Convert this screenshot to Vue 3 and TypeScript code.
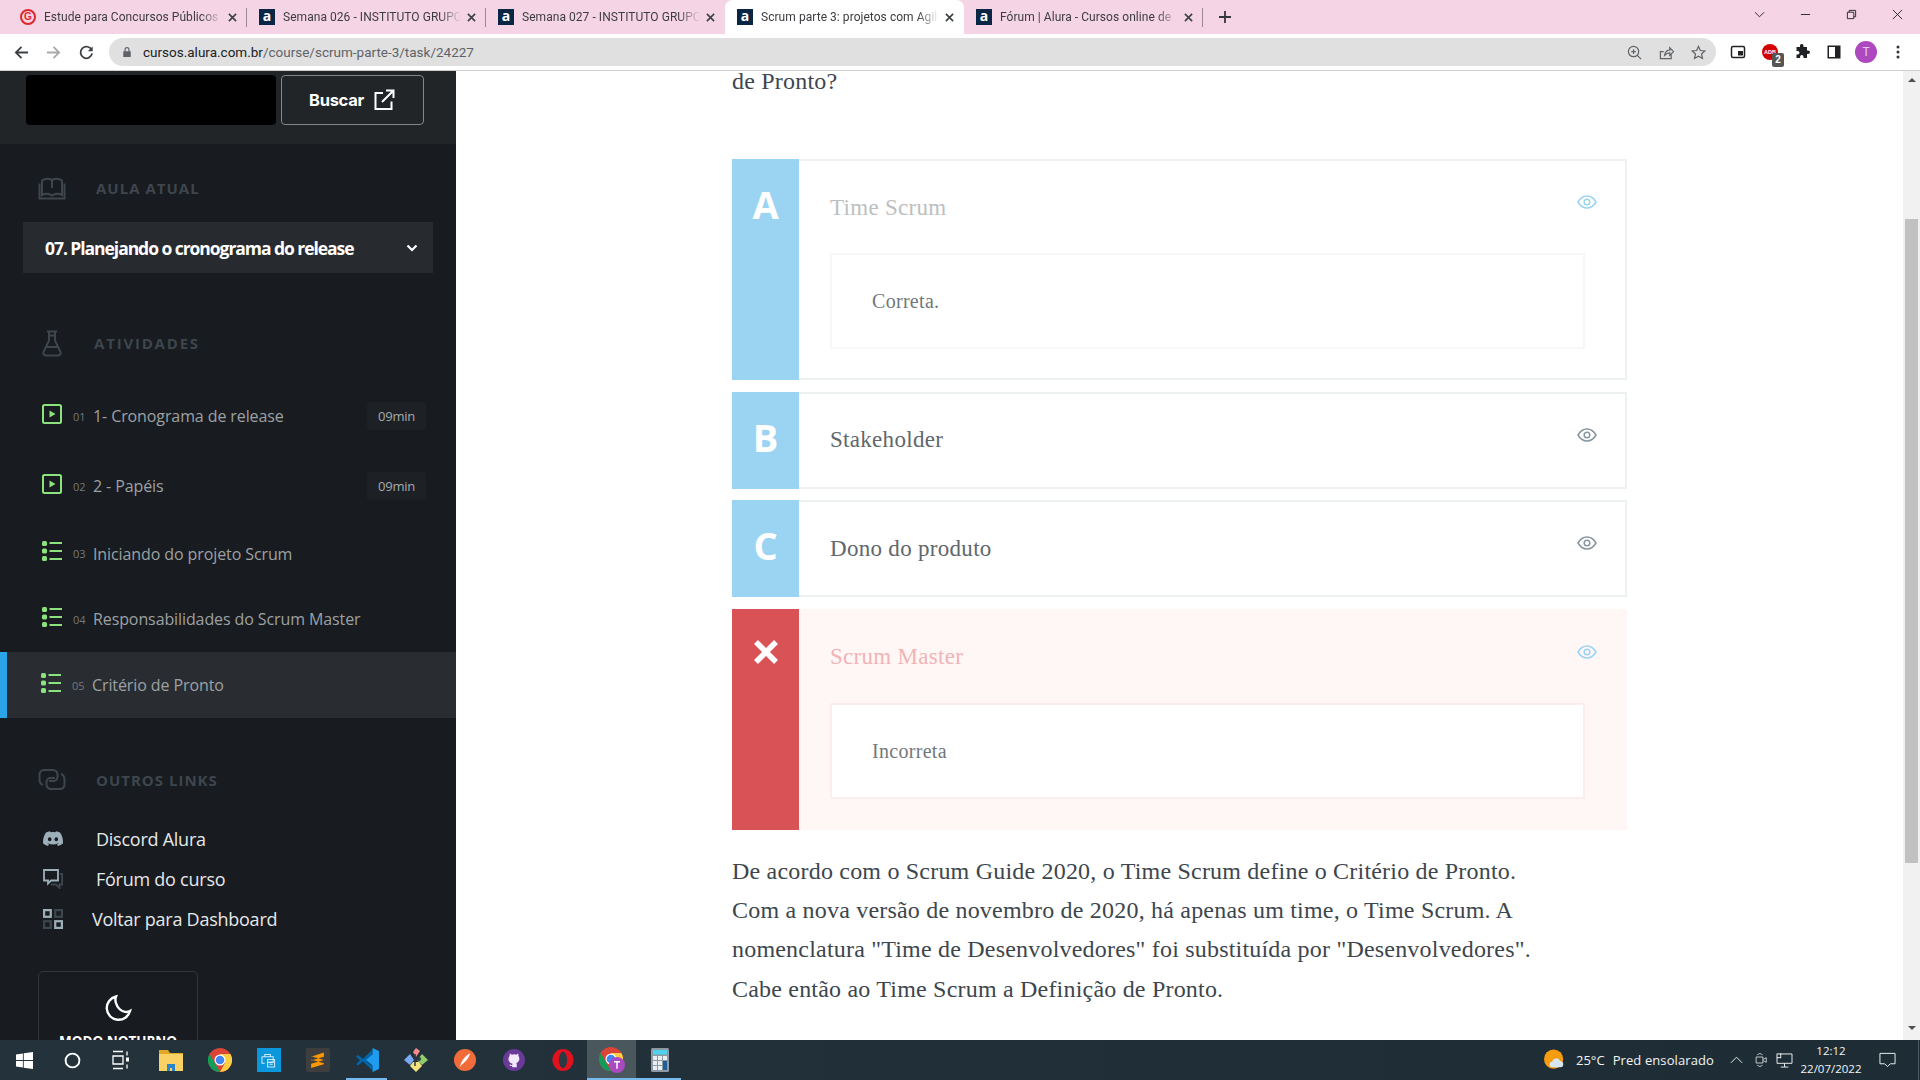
<template>
  <div class="screen">
    <header class="tabstrip">
      <div
        v-for="tab in tabs"
        :key="tab.title"
        class="tab"
        :class="{ 'tab--active': tab.active, 'tab--sep': tab.separator }"
      >
        <span v-if="tab.google" class="fav-google">G</span>
        <span v-else class="fav-alura">a</span>
        <span class="tab-title">{{ tab.title }}</span>
        <svg class="tab-close" viewBox="0 0 10 10"><path d="M1 1l8 8M9 1l-8 8" /></svg>
      </div>
      <svg class="tab-plus" viewBox="0 0 12 12"><path d="M6 0v12M0 6h12" /></svg>
      <div class="win-controls">
        <svg viewBox="0 0 12 12"><path d="M1 3.5l5 5 5-5" /></svg>
        <svg viewBox="0 0 12 12"><path d="M1 6h10" /></svg>
        <svg viewBox="0 0 12 12"><path d="M1.5 3.5h7v7h-7zM3.5 3.5v-2h7v7h-2" /></svg>
        <svg viewBox="0 0 12 12"><path d="M1 1l10 10M11 1l-10 10" /></svg>
      </div>
    </header>

    <div class="toolbar">
      <svg class="nav-icon" viewBox="0 0 16 16"><path d="M15 8H2M8 2L2 8l6 6" /></svg>
      <svg class="nav-icon nav-icon--off" viewBox="0 0 16 16"><path d="M1 8h13M8 2l6 6-6 6" /></svg>
      <svg class="nav-icon" viewBox="0 0 16 16"><path d="M13.6 5.5A6.2 6.2 0 1 0 14 9" /><path class="fill" d="M14.6 1.5v5.2H9.4z" /></svg>
      <div class="omnibox">
        <svg class="lock" viewBox="0 0 12 14"><path d="M3 6V4a3 3 0 0 1 6 0v2h1.500v7h-9V6zm1.400 0h3.200V4a1.600 1.600 0 0 0-3.200 0z" /></svg>
        <span class="url"><b>cursos.alura.com.br</b>/course/scrum-parte-3/task/24227</span>
        <svg class="omni-icon" viewBox="0 0 16 16"><circle cx="7" cy="7" r="5.500" /><path d="M11 11l4 4M7 4.500v5M4.500 7h5" /></svg>
        <svg class="omni-icon" viewBox="0 0 16 16"><path d="M13 10v4.500H1.500V7H5M6 11c.5-3.500 3-5.500 5.500-5.500V3l4 4-4 4V8.500C9.500 8.500 7.500 9.500 6 11z" /></svg>
        <svg class="omni-icon" viewBox="0 0 16 16"><path d="M8 1.500l2 4.400 4.700.5-3.500 3.200 1 4.700L8 11.900l-4.200 2.400 1-4.700-3.500-3.200 4.700-.5z" /></svg>
      </div>
      <div class="ext-row">
        <svg class="ext" viewBox="0 0 16 16"><rect x="1.500" y="2.500" width="13" height="11" rx="1.500" fill="none" stroke="#202124" stroke-width="1.500" /><rect x="8" y="7" width="5" height="4.500" fill="#202124" /></svg>
        <span class="adblock">
          <span class="adblock-dot">ADB</span>
          <span class="adblock-num">2</span>
        </span>
        <svg class="ext" viewBox="0 0 16 16"><path fill="#202124" d="M6 1.500a1.800 1.800 0 0 1 3.500 0V3H13v3.500h1.200a1.800 1.800 0 0 1 0 3.600H13V14H9.500v-1.300a1.700 1.700 0 0 0-3.400 0V14H2.500v-3.500h1.200a1.800 1.800 0 0 0 0-3.600H2.500V3H6z" /></svg>
        <svg class="ext" viewBox="0 0 16 16"><rect x="1.500" y="1.500" width="13" height="13" fill="#202124" /><rect x="3" y="3" width="6" height="10" fill="#fff" /></svg>
        <span class="avatar">T</span>
        <svg class="ext" viewBox="0 0 16 16"><circle cx="8" cy="3" r="1.500" fill="#333" /><circle cx="8" cy="8" r="1.500" fill="#333" /><circle cx="8" cy="13" r="1.500" fill="#333" /></svg>
      </div>
    </div>

    <div class="viewport">
      <aside class="sidebar">
        <div class="search">
          <div class="search-input"></div>
          <button class="search-btn">
            Buscar
            <svg viewBox="0 0 24 24"><path d="M11 5H3.500v16h16v-7.500M10 14L21 3M14 2.500h7.500V10" /></svg>
          </button>
        </div>

        <div class="side-title side-title--lesson">
          <svg class="title-icon" viewBox="0 0 28 23"><path d="M4 3.500C7 1.500 11 1.500 14 3c3-1.500 7-1.500 10 .5v14.500c-3-1.500-7-1.500-10 .5-3-2-7-2-10-.5zM14 3v8M1.500 6.500v15h25v-15" /></svg>
          <span>AULA ATUAL</span>
        </div>
        <div class="lesson-select">
          <span>07. Planejando o cronograma do release</span>
          <svg viewBox="0 0 12 8"><path d="M1.500 1.500L6 6l4.500-4.500" /></svg>
        </div>

        <div class="side-title side-title--activities">
          <svg class="title-icon title-icon--flask" viewBox="0 0 20 27"><path d="M5 1.500h10M7 1.500v9L1.800 21.500a2.600 2.600 0 0 0 2.400 4h11.600a2.600 2.600 0 0 0 2.400-4L13 10.500v-9M7 5.500h6M4.500 17h11" /></svg>
          <span>ATIVIDADES</span>
        </div>
        <ul class="activities">
          <li
            v-for="item in activities"
            :key="item.num"
            class="activity"
            :class="{ 'activity--current': item.current, 'activity--video': item.video }"
          >
            <svg v-if="item.video" class="activity-icon" viewBox="0 0 20 20">
              <rect x="1" y="1" width="18" height="18" rx="1.500" fill="none" stroke="#8ce27c" stroke-width="2" />
              <path d="M7.500 6.500v7l6-3.500z" fill="#8ce27c" />
            </svg>
            <svg v-else class="activity-icon" viewBox="0 0 20 20">
              <rect x="0" y="0" width="5" height="5" rx="1.500" fill="#8ce27c" />
              <rect x="0" y="7.500" width="5" height="5" rx="1.500" fill="#8ce27c" />
              <rect x="0" y="15" width="5" height="5" rx="1.500" fill="#8ce27c" />
              <path d="M7.500 2h12.500M7.500 10h12.500M7.500 18h12.500" stroke="#8ce27c" stroke-width="2" />
            </svg>
            <span class="activity-num">{{ item.num }}</span>
            <span class="activity-name">{{ item.name }}</span>
            <span v-if="item.time" class="activity-time">{{ item.time }}</span>
          </li>
        </ul>

        <div class="side-title side-title--links">
          <svg class="title-icon" viewBox="0 0 28 22"><path d="M5 16.500C2.500 15.500 1.500 13.500 1.500 11V6a4.500 4.500 0 0 1 4.500-4.500h9A4.500 4.500 0 0 1 19.500 6v2.500a4 4 0 0 1-4 4H11M23 5.500c2.500 1 3.500 3 3.500 5.500v5a4.500 4.500 0 0 1-4.500 4.500h-9A4.500 4.500 0 0 1 8.500 16v-2.500a4 4 0 0 1 4-4H17" /></svg>
          <span>OUTROS LINKS</span>
        </div>
        <div class="link-row">
          <svg class="link-icon" viewBox="0 0 20 16"><path fill="#9db0b9" d="M17 1.500A16 16 0 0 0 13 .2l-.5 1a15 15 0 0 0-5 0L7 .2a16 16 0 0 0-4 1.300C.5 5.200-.2 8.800.1 12.400A16 16 0 0 0 5 15l1-1.700-1.600-.8.400-.3a11.500 11.500 0 0 0 10.400 0l.4.300-1.600.8L15 15a16 16 0 0 0 4.900-2.600c.4-4.200-.7-7.800-2.900-10.900zM6.700 10.300c-1 0-1.800-.9-1.800-2s.8-2 1.800-2 1.800.9 1.800 2-.8 2-1.800 2zm6.600 0c-1 0-1.800-.9-1.800-2s.8-2 1.800-2 1.800.9 1.800 2-.8 2-1.800 2z" /></svg>
          <span class="link-text">Discord Alura</span>
        </div>
        <div class="link-row">
          <svg class="link-icon" viewBox="0 0 20 20"><path fill="none" stroke="#9db0b9" stroke-width="1.800" d="M1 1h14v10.500H8L5 14.500v-3H1z" /><path fill="none" stroke="#3d464d" stroke-width="1.800" d="M17 5h2.200v10.500h-2.700V19l-3.500-3.500H8" /></svg>
          <span class="link-text">Fórum do curso</span>
        </div>
        <div class="link-row">
          <svg class="link-icon" viewBox="0 0 18 18"><g fill="none" stroke-width="2"><rect x="1" y="1" width="6" height="6" stroke="#9db0b9" /><rect x="11" y="1" width="6" height="6" stroke="#3d464d" /><rect x="1" y="11" width="6" height="6" stroke="#3d464d" /><rect x="11" y="11" width="6" height="6" stroke="#9db0b9" /></g></svg>
          <span class="link-text link-text--back">Voltar para Dashboard</span>
        </div>

        <div class="night-mode">
          <svg viewBox="0 0 28 28"><path d="M12 2.500a11.800 11.800 0 1 0 14 14.500c-2.500 1.500-7 1.500-10.500-2S10.500 6 12 2.500z" /></svg>
          <span>MODO NOTURNO</span>
        </div>
      </aside>

      <main class="content">
        <p class="question">de Pronto?</p>
        <div class="options">
          <section
            v-for="option in options"
            :key="option.title"
            class="option"
            :class="{ 'option--wrong': option.wrong, 'option--open': option.feedback }"
          >
            <div class="option-letter">
              <svg v-if="option.wrong" viewBox="0 0 26 26"><path d="M3 3l20 20M23 3L3 23" /></svg>
              <span v-else>{{ option.letter }}</span>
            </div>
            <div class="option-body">
              <div class="option-head">
                <span class="option-title">{{ option.title }}</span>
                <svg class="eye" viewBox="0 0 20 14"><path d="M1 7c2.200-3.800 5.300-6 9-6s6.800 2.200 9 6c-2.200 3.800-5.300 6-9 6s-6.800-2.200-9-6z" /><circle cx="10" cy="7" r="2.800" /></svg>
              </div>
              <div v-if="option.feedback" class="option-feedback">{{ option.feedback }}</div>
            </div>
          </section>
        </div>
        <div class="explanation">
          <span v-for="line in explanation" :key="line">{{ line }}</span>
        </div>
      </main>

      <div class="scrollbar">
        <i class="arrow arrow--up"></i>
        <div class="thumb"></div>
        <i class="arrow arrow--down"></i>
      </div>
    </div>

    <footer class="taskbar">
      <div class="task-slot task-slot--sys">
        <svg viewBox="0 0 18 18" width="17" height="17"><path fill="#fff" d="M0 2.600l7.300-1v7H0zM8.200 1.400L18 0v8.600H8.200zM0 9.400h7.300v7L0 15.400zM8.200 9.400H18V18l-9.800-1.400z" /></svg>
      </div>
      <div class="task-slot task-slot--sys">
        <svg viewBox="0 0 18 18" width="17" height="17"><circle cx="9" cy="9" r="7.300" fill="none" stroke="#fff" stroke-width="2" /></svg>
      </div>
      <div class="task-slot task-slot--sys task-slot--view">
        <svg viewBox="0 0 20 20" width="20" height="20"><path fill="none" stroke="#fff" stroke-width="1.300" d="M2 1.500h10M2 18.500h10M2 6h10v8H2zM16 1.500v4M16 14.500v4" /><rect x="15" y="7.500" width="3" height="4" fill="#fff" /></svg>
      </div>
      <div class="task-slot">
        <svg viewBox="0 0 24 22" width="24" height="22"><path fill="#e0a826" d="M0 1h9l2 3h13v18H0z" /><path fill="#fad165" d="M0 5h24v17H0z" /><path fill="#2a85c9" d="M8 22v-7h8v7h-3v-3h-2v3z" /></svg>
      </div>
      <div class="task-slot">
        <svg viewBox="0 0 24 24" width="24" height="24">
          <circle cx="12" cy="12" r="12" fill="#db4437" />
          <path fill="#0f9d58" d="M12 24A12 12 0 0 1 1.600 6L7 15.500z" />
          <path fill="#ffcd40" d="M12 24a12 12 0 0 0 10.400-18H12l5 9z" />
          <circle cx="12" cy="12" r="5.500" fill="#fff" />
          <circle cx="12" cy="12" r="4.300" fill="#4285f4" />
        </svg>
      </div>
      <div class="task-slot">
        <span class="store-tile">
          <svg viewBox="0 0 16 16" width="15" height="15"><path fill="none" stroke="#cfeaf8" stroke-width="1.100" d="M4 4V1.500h6V4M1 4h12v6H7M1 4v7h3M7 7h7.500v8H7zM9 9.500h3.500M9 12h3.500" /></svg>
        </span>
      </div>
      <div class="task-slot">
        <span class="sublime-tile">
          <svg viewBox="0 0 16 16" width="17" height="18"><path fill="#ff9800" d="M14 1v4L2 8.500V5zM2 7.500l12 3.500v-3L2 4.500zM14 8v4L2 15.500v-4z" /></svg>
        </span>
      </div>
      <div class="task-slot task-slot--running">
        <svg viewBox="0 0 24 24" width="24" height="24">
          <path fill="#0065a9" d="M1 8.500l2-1.500 5 3.800L17 2l.5 7-6 4.500 6 4.500-.5 4-9-8.500L3 17.500 1 16l4-3.500z" />
          <path fill="#1f9cf0" d="M17.500 0L24 3v18l-6.500 3zM17.500 6.500L11 12l6.500 5.500z" />
        </svg>
      </div>
      <div class="task-slot">
        <svg viewBox="0 0 24 24" width="24" height="24">
          <path fill="#f78c8c" d="M12 0l4 3-4 6-3-5z" />
          <path fill="#7aa9f7" d="M0 12l6-6 4 6-4 5z" />
          <path fill="#8fce6b" d="M24 12l-6-6-5 6 5 5z" />
          <path fill="#f4e27c" d="M12 24l-6-6 3-4h6l3 4z" />
          <circle cx="15" cy="11" r="2" fill="#2a3a42" />
          <path stroke="#2a3a42" stroke-width="1.500" d="M11 6v12" />
        </svg>
      </div>
      <div class="task-slot">
        <svg viewBox="0 0 24 24" width="22" height="24"><circle cx="12" cy="12" r="12" fill="#f26b3a" /><path fill="#fff" d="M17.500 4.500c-.7 4-4.500 9-9 12.500l-1.800 2.500.6-3.200C9 11.500 13 7 17.500 4.500z" /></svg>
      </div>
      <div class="task-slot">
        <svg viewBox="0 0 24 24" width="22" height="24"><circle cx="12" cy="12" r="12" fill="#6a3a98" /><path fill="#f3e9fb" d="M7.500 5l2.300 1.200a7 7 0 0 1 4.400 0L16.500 5l.5 3a5 5 0 0 1-2.500 7.500c.4.500.5 1 .5 1.500v3H10v-1.500c-1.500.3-2.500-.2-3-1.700l1.200.2c.5.700 1 .8 1.800.7 0-.7.100-1.200.5-1.700A5 5 0 0 1 7 8z" /></svg>
      </div>
      <div class="task-slot">
        <svg viewBox="0 0 24 24" width="22" height="24"><ellipse cx="12" cy="12" rx="11.500" ry="12" fill="#e0121f" /><ellipse cx="12" cy="12" rx="4.500" ry="9" fill="#2a3a42" /></svg>
      </div>
      <div class="task-slot task-slot--active task-slot--running">
        <svg viewBox="0 0 26 26" width="26" height="26">
          <circle cx="12" cy="12" r="12" fill="#db4437" />
          <path fill="#0f9d58" d="M12 24A12 12 0 0 1 1.600 6L7 15.500z" />
          <path fill="#ffcd40" d="M12 24a12 12 0 0 0 10.400-18H12l5 9z" />
          <circle cx="12" cy="12" r="5.500" fill="#fff" />
          <circle cx="12" cy="12" r="4.300" fill="#4285f4" />
          <circle cx="18" cy="18" r="8" fill="#a94ac0" />
          <path stroke="#fff" stroke-width="1.400" d="M15 14.800h6M18 14.800v7" />
        </svg>
      </div>
      <div class="task-slot task-slot--calc task-slot--running">
        <svg viewBox="0 0 18 24" width="18" height="24">
          <rect width="18" height="24" rx="1.500" fill="#8d9aa3" />
          <rect x="2" y="2" width="14" height="4.500" fill="#4fd0ee" />
          <g fill="#e8eef1"><rect x="2" y="8" width="4" height="4" /><rect x="7" y="8" width="4" height="4" /><rect x="12" y="8" width="4" height="4" /><rect x="2" y="13" width="4" height="4" /><rect x="7" y="13" width="4" height="4" /><rect x="2" y="18" width="4" height="4" /><rect x="7" y="18" width="4" height="4" /></g>
          <rect x="12" y="13" width="4" height="9" fill="#1f5f99" />
        </svg>
      </div>

      <div class="tray">
        <svg class="weather" viewBox="0 0 24 24"><circle cx="10.500" cy="11" r="10.500" fill="#f59c0f" /><path fill="#d8e6f2" d="M9 20a3 3 0 0 1 0-6 4.500 4.500 0 0 1 8.600-1 3.600 3.600 0 0 1 3.400 3.600A3.400 3.400 0 0 1 18 20z" /></svg>
        <span class="tray-temp">25°C</span>
        <span class="tray-cond">Pred ensolarado</span>
        <svg class="tray-icon tray-icon--chev" viewBox="0 0 14 8"><path d="M1 7l6-6 6 6" /></svg>
        <svg class="tray-icon tray-icon--meet" viewBox="0 0 16 20"><path d="M3 3a5 5 0 0 1 7 0M3 17a5 5 0 0 0 7 0M1.500 6h9v8h-9zM11 9l4-2v6l-4-2" /></svg>
        <svg class="tray-icon tray-icon--net" viewBox="0 0 18 16"><path d="M4 1h13v10H1V5M9 11v4M5 15h8" /><rect x="1" y="1" width="4" height="4" /></svg>
        <div class="clock">
          <span>12:12</span>
          <span>22/07/2022</span>
        </div>
        <svg class="tray-icon tray-icon--note" viewBox="0 0 18 16"><path d="M1 1h16v11h-5l-3 3-3-3H1z" /></svg>
        <i class="show-desktop"></i>
      </div>
    </footer>
  </div>
</template>

<script setup lang="ts">
interface BrowserTab {
  title: string
  google?: boolean
  active?: boolean
  separator?: boolean
}

interface Activity {
  num: string
  name: string
  time?: string
  video?: boolean
  current?: boolean
}

interface AnswerOption {
  letter: string
  title: string
  feedback?: string
  wrong?: boolean
}

const tabs: BrowserTab[] = [
  { title: 'Estude para Concursos Públicos c', google: true, separator: true },
  { title: 'Semana 026 - INSTITUTO GRUPO', separator: true },
  { title: 'Semana 027 - INSTITUTO GRUPO' },
  { title: 'Scrum parte 3: projetos com Agil', active: true },
  { title: 'Fórum | Alura - Cursos online de', separator: true },
]

const activities: Activity[] = [
  { num: '01', name: '1- Cronograma de release', time: '09min', video: true },
  { num: '02', name: '2 - Papéis', time: '09min', video: true },
  { num: '03', name: 'Iniciando do projeto Scrum' },
  { num: '04', name: 'Responsabilidades do Scrum Master' },
  { num: '05', name: 'Critério de Pronto', current: true },
]

const options: AnswerOption[] = [
  { letter: 'A', title: 'Time Scrum', feedback: 'Correta.' },
  { letter: 'B', title: 'Stakeholder' },
  { letter: 'C', title: 'Dono do produto' },
  { letter: 'D', title: 'Scrum Master', feedback: 'Incorreta', wrong: true },
]

const explanation: string[] = [
  'De acordo com o Scrum Guide 2020, o Time Scrum define o Critério de Pronto.',
  'Com a nova versão de novembro de 2020, há apenas um time, o Time Scrum. A',
  'nomenclatura "Time de Desenvolvedores" foi substituída por "Desenvolvedores".',
  'Cabe então ao Time Scrum a Definição de Pronto.',
]
</script>

<style>
html,
body {
  margin: 0;
  overflow: hidden;
}
</style>

<style scoped>
.screen {
  width: 1920px;
  height: 1080px;
  display: flex;
  flex-direction: column;
  overflow: hidden;
  font-family: "Open Sans", sans-serif;
}

/* browser chrome */
.tabstrip {
  height: 34px;
  flex: none;
  display: flex;
  align-items: stretch;
  padding-left: 8px;
  background: #f5d5e5;
  font-family: Roboto, "Noto Sans", sans-serif;
}
.tab {
  position: relative;
  width: 239px;
  box-sizing: border-box;
  display: flex;
  align-items: center;
  padding: 0 10px 0 12px;
  font-size: 12px;
  color: #3c3c40;
}
.tab--sep::after {
  content: "";
  position: absolute;
  right: 0;
  top: 8px;
  height: 19px;
  width: 1px;
  background: #9c8a94;
}
.tab--active {
  background: #fff;
  border-radius: 8px 8px 0 0;
}
.fav-alura {
  width: 16px;
  height: 16px;
  flex: none;
  background: #0b2545;
  color: #fff;
  font: 700 14px/14px "Open Sans", sans-serif;
  text-align: center;
}
.fav-google {
  width: 16px;
  height: 16px;
  flex: none;
  box-sizing: border-box;
  border: 2px solid #e0272b;
  border-radius: 50%;
  color: #e0272b;
  font: 700 10px/12px "Liberation Sans", sans-serif;
  text-align: center;
}
.tab-title {
  flex: 1;
  min-width: 0;
  margin-left: 8px;
  white-space: nowrap;
  overflow: hidden;
  letter-spacing: 0.05px;
  -webkit-mask-image: linear-gradient(to right, #000 88%, transparent 100%);
  mask-image: linear-gradient(to right, #000 88%, transparent 100%);
}
.tab-close {
  width: 9px;
  height: 9px;
  flex: none;
  margin-left: 6px;
  fill: none;
  stroke: #3c4043;
  stroke-width: 1.800;
}
.tab-plus {
  width: 12px;
  height: 12px;
  margin: 11px 0 0 16px;
  fill: none;
  stroke: #35363a;
  stroke-width: 1.800;
}
.win-controls {
  margin-left: auto;
  display: flex;
  height: 28px;
  align-items: center;
  gap: 35px;
  padding-right: 17px;
}
.win-controls svg {
  width: 11px;
  height: 11px;
  fill: none;
  stroke: #222;
  stroke-width: 1;
}

.toolbar {
  height: 36px;
  flex: none;
  box-sizing: content-box;
  display: flex;
  align-items: center;
  background: #fff;
  border-bottom: 1px solid #cfcfcf;
  padding-left: 14px;
}
.nav-icon {
  width: 15px;
  height: 15px;
  margin-right: 17px;
  fill: none;
  stroke: #3c4043;
  stroke-width: 1.900;
}
.nav-icon--off {
  margin-right: 18px;
  stroke: #a9a9a9;
}
.nav-icon .fill {
  fill: #3c4043;
  stroke: none;
}
.omnibox {
  width: 1607px;
  height: 28px;
  margin-left: -2px;
  box-sizing: border-box;
  display: flex;
  align-items: center;
  background: #e0e0e0;
  border-radius: 14px;
  padding-left: 13px;
}
.lock {
  width: 10px;
  height: 12px;
  fill: #5f6368;
}
.url {
  margin-left: 11px;
  font: 13.500px Roboto, "Noto Sans", sans-serif;
  color: #5f6368;
  white-space: nowrap;
}
.url b {
  font-weight: 400;
  color: #202124;
}
.omni-icon {
  width: 15px;
  height: 15px;
  fill: none;
  stroke: #5f6368;
  stroke-width: 1.300;
  margin-right: 17px;
}
.url + .omni-icon {
  margin-left: auto;
}
.omni-icon:last-child {
  margin-right: 10px;
}
.ext-row {
  display: flex;
  align-items: center;
  margin-left: 14px;
  gap: 16px;
}
.ext {
  width: 16px;
  height: 16px;
}
.adblock {
  position: relative;
  width: 16px;
  height: 16px;
}
.adblock-dot {
  display: block;
  width: 16px;
  height: 16px;
  border-radius: 50%;
  background: #d40000;
  color: #fff;
  font: 700 5.500px/16px "Liberation Sans", sans-serif;
  text-align: center;
}
.adblock-num {
  position: absolute;
  left: 10px;
  top: 9px;
  width: 12px;
  height: 14px;
  border-radius: 2px;
  background: #555;
  color: #fff;
  font: 700 10px/14px "Liberation Sans", sans-serif;
  text-align: center;
}
.avatar {
  width: 22px;
  height: 22px;
  margin: 0 -3px;
  border-radius: 50%;
  background: #ad48bf;
  color: #ecc7f2;
  font: 12px/22px Roboto, sans-serif;
  text-align: center;
}

.viewport {
  flex: 1;
  min-height: 0;
  display: flex;
  background: #fff;
}

/* left menu */
.sidebar {
  width: 456px;
  flex: none;
  background: #181b1f;
  overflow: hidden;
}
.search {
  height: 73px;
  box-sizing: border-box;
  display: flex;
  gap: 5px;
  padding: 4px 0 0 26px;
  background: #212528;
}
.search-input {
  width: 250px;
  height: 50px;
  background: #000;
  border-radius: 4px;
}
.search-btn {
  width: 143px;
  height: 50px;
  box-sizing: border-box;
  display: flex;
  align-items: center;
  justify-content: center;
  gap: 8px;
  background: transparent;
  border: 1px solid #83878a;
  border-radius: 4px;
  color: #fff;
  font: 700 16.500px Inter, sans-serif;
  letter-spacing: -0.3px;
}
.search-btn svg {
  width: 24px;
  height: 24px;
  fill: none;
  stroke: #fff;
  stroke-width: 2;
}
.side-title {
  display: flex;
  align-items: center;
  font-size: 15px;
  font-weight: 700;
  letter-spacing: 1px;
  color: #3d464d;
  white-space: nowrap;
}
.title-icon {
  flex: none;
  fill: none;
  stroke: #3d464d;
  stroke-width: 2;
  width: 28px;
  height: 23px;
}
.side-title--lesson {
  height: 30px;
  margin-top: 29px;
  padding-left: 38px;
  gap: 30px;
}
.lesson-select {
  width: 410px;
  height: 51px;
  box-sizing: border-box;
  margin: 19px 0 0 23px;
  display: flex;
  align-items: center;
  justify-content: space-between;
  padding: 0 15px 0 22px;
  background: #272b2f;
  color: #fff;
  font-size: 17.500px;
  font-weight: 700;
  letter-spacing: -1.050px;
  white-space: nowrap;
}
.lesson-select svg {
  width: 12px;
  height: 8px;
  fill: none;
  stroke: #fff;
  stroke-width: 2.200;
}
.side-title--activities {
  height: 30px;
  margin-top: 55px;
  padding-left: 42px;
  gap: 32px;
  letter-spacing: 1.800px;
}
.title-icon--flask {
  width: 20px;
  height: 27px;
}
.activities {
  list-style: none;
  margin: 23px 0 0;
  padding: 0;
}
.activity {
  position: relative;
  height: 65.500px;
  box-sizing: border-box;
  display: flex;
  align-items: center;
  padding-left: 42px;
}
.activity--video {
  height: 70px;
}
.activity--current {
  height: 66px;
  padding-left: 34px;
  border-left: 7px solid #2ba5e8;
  background: #292d31;
}
.activity-icon {
  width: 20px;
  height: 20px;
  flex: none;
  margin-top: -5px;
}
.activity-num {
  width: 20px;
  margin-left: 11px;
  font-size: 11px;
  color: #73787c;
}
.activity-name {
  font-size: 16px;
  letter-spacing: -0.1px;
  color: #9da1a4;
  white-space: nowrap;
}
.activity-time {
  margin-left: auto;
  margin-right: 30px;
  width: 59px;
  height: 28px;
  background: #1d2125;
  border-radius: 2px;
  font-size: 13px;
  letter-spacing: -0.2px;
  line-height: 28px;
  text-align: center;
  color: #a6aaad;
}
.side-title--links {
  height: 30px;
  margin-top: 46.500px;
  padding-left: 38px;
  gap: 30px;
}
.link-row {
  height: 40px;
  display: flex;
  align-items: center;
  padding-left: 43px;
}
.side-title--links + .link-row {
  margin-top: 24.500px;
}
.link-icon {
  width: 20px;
  height: 20px;
  flex: none;
}
.link-text {
  margin-left: 33px;
  font-size: 18px;
  letter-spacing: -0.25px;
  color: #e6e8e9;
  white-space: nowrap;
}
.link-text--back {
  margin-left: 29px;
}
.night-mode {
  width: 160px;
  height: 120px;
  box-sizing: border-box;
  margin: 32px 0 0 38px;
  display: flex;
  flex-direction: column;
  align-items: center;
  padding-top: 22px;
  gap: 10px;
  border: 1px solid #33373b;
  border-radius: 5px;
  color: #fff;
  font-size: 13.500px;
  font-weight: 700;
  white-space: nowrap;
}
.night-mode svg {
  width: 28px;
  height: 28px;
  flex: none;
  fill: none;
  stroke: #fff;
  stroke-width: 2.400;
}

/* course task */
.content {
  flex: 1;
  min-width: 0;
  box-sizing: border-box;
  padding-left: 276px;
  overflow: hidden;
  font-family: "Liberation Serif", serif;
}
.question {
  margin: 0;
  font-size: 24px;
  line-height: 20px;
  letter-spacing: 0.2px;
  color: #3d464d;
}
.options {
  width: 895px;
  margin-top: 68px;
  display: flex;
  flex-direction: column;
  gap: 11.500px;
}
.option {
  display: flex;
  box-sizing: border-box;
  border: 2px solid #eef1f2;
  border-left: 0;
}
.option--wrong {
  background: #fff6f6;
  border-color: #fff6f6;
}
.option-letter {
  width: 67px;
  flex: none;
  margin: -2px 0;
  padding-top: 20px;
  background: #9bd4f3;
  color: #fff;
  font: 700 38px/50px "Open Sans", sans-serif;
  text-align: center;
}
.option--wrong .option-letter {
  background: #d95356;
}
.option-letter svg {
  display: block;
  width: 26px;
  height: 26px;
  margin: 10px auto 0;
  fill: none;
  stroke: #fff;
  stroke-width: 5.500;
}
.option-body {
  flex: 1;
  min-width: 0;
  padding: 0 40px 0 31px;
}
.option-head {
  height: 93px;
  position: relative;
  display: flex;
  align-items: center;
  box-sizing: border-box;
}
.option-title {
  font-size: 23px;
  letter-spacing: 0.3px;
  color: #5f676d;
}
.option--open .option-title {
  color: #bcbfc1;
}
.option--wrong .option-title {
  color: #f0b4b4;
}
.eye {
  position: absolute;
  right: -12px;
  top: 34px;
  width: 20px;
  height: 14px;
  fill: none;
  stroke: #87969f;
  stroke-width: 1.500;
}
.option--open .eye {
  stroke: #9bd4f3;
}
.option-feedback {
  height: 96px;
  box-sizing: border-box;
  margin: -1px 0 29px;
  padding-left: 40px;
  background: #fff;
  border: 2px solid #f5f7f8;
  font-size: 20px;
  line-height: 92px;
  letter-spacing: 0.3px;
  color: #72777b;
}
.option--wrong .option-feedback {
  border-color: #fdeeee;
}
.explanation {
  margin-top: 22px;
  display: flex;
  flex-direction: column;
  font-size: 24px;
  line-height: 39.400px;
  letter-spacing: 0.2px;
  color: #3d464d;
  white-space: nowrap;
}

/* page scrollbar */
.scrollbar {
  width: 17px;
  flex: none;
  box-sizing: border-box;
  display: flex;
  flex-direction: column;
  align-items: center;
  background: #f1f1f1;
}
.thumb {
  width: 13px;
  height: 644px;
  margin-top: 137px;
  background: #c1c1c1;
}
.arrow {
  width: 0;
  height: 0;
  border-left: 4px solid transparent;
  border-right: 4px solid transparent;
}
.arrow--up {
  margin-top: 7px;
  border-bottom: 4px solid #505050;
}
.arrow--down {
  margin-top: 163px;
  border-top: 4px solid #505050;
}

/* windows taskbar */
.taskbar {
  height: 40px;
  flex: none;
  display: flex;
  align-items: center;
  background: linear-gradient(90deg, #24333b, #1e2d35);
  font-family: "Open Sans", sans-serif;
  color: #fff;
}
.task-slot {
  position: relative;
  width: 49px;
  height: 40px;
  flex: none;
  display: flex;
  align-items: center;
  justify-content: center;
}
.task-slot--sys {
  width: 48px;
}
.task-slot--view {
  width: 50px;
}
.task-slot--running::after {
  content: "";
  position: absolute;
  left: 4px;
  right: 4px;
  bottom: 0;
  height: 2px;
  background: #76b9ed;
}
.task-slot--active {
  background: #4a575d;
}
.task-slot--active::after {
  left: 0;
  right: 0;
}
.task-slot--calc {
  width: 48px;
  box-sizing: border-box;
}
.task-slot--calc::after {
  left: 0;
  right: 3px;
}
.store-tile {
  width: 24px;
  height: 24px;
  display: flex;
  align-items: center;
  justify-content: center;
  background: #0a97dc;
}
.sublime-tile {
  width: 24px;
  height: 24px;
  display: flex;
  align-items: center;
  justify-content: center;
  background: #3e3e3e;
  border-radius: 2px;
}
.tray {
  margin-left: auto;
  height: 40px;
  display: flex;
  align-items: center;
  font-size: 13px;
  color: #f2f4f5;
  white-space: nowrap;
}
.weather {
  width: 22px;
  height: 22px;
}
.tray-temp {
  margin-left: 10px;
}
.tray-cond {
  margin-left: 8px;
  letter-spacing: 0.1px;
}
.tray-icon {
  fill: none;
  stroke: #f2f4f5;
  stroke-width: 1;
}
.tray-icon--chev {
  width: 13px;
  height: 8px;
  margin-left: 16px;
}
.tray-icon--meet {
  width: 12px;
  height: 16px;
  margin-left: 12px;
}
.tray-icon--net {
  width: 17px;
  height: 15px;
  margin-left: 9px;
}
.clock {
  width: 60px;
  margin-left: 8px;
  display: flex;
  flex-direction: column;
  align-items: center;
  font-size: 11.500px;
  line-height: 18px;
}
.tray-icon--note {
  width: 17px;
  height: 16px;
  margin-left: 18px;
}
.show-desktop {
  width: 1px;
  height: 40px;
  margin-left: 22px;
  margin-right: 1px;
  background: #4e5b62;
}
</style>
